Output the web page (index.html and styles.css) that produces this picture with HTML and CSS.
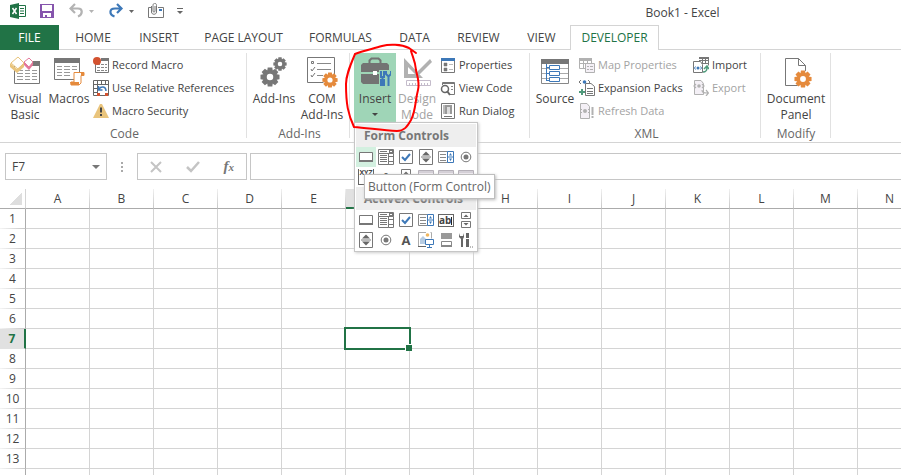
FILE: index.html
```html
<!DOCTYPE html>
<html lang="en">
<head>
<meta charset="utf-8">
<title>Book1 - Excel</title>
<link rel="stylesheet" href="styles.css">
</head>
<body>
<svg class="sprite" aria-hidden="true">
  <symbol id="i-button" viewBox="0 0 16 16"><path d="M1.500 3.500h13v9h-13z" fill="#fff" stroke="#777"/><path d="M1 12h14" stroke="#777" stroke-width="2"/></symbol>
  <symbol id="i-combo" viewBox="0 0 16 16"><path d="M.500.500h15v4H.500zM.500 4.500v11h10v-11M10.500 4.500v11h5v-11" fill="#fff" stroke="#777"/><path d="M11 1h4v3h-4z" fill="#777"/><path d="M12 2h2v1h-2z" fill="#fff"/><path d="M2 2.500h7M2 6.500h7M2 8.500h7M2 10.500h7M2 12.500h7M11 12.500h4M11 7.500h4" stroke="#777"/></symbol>
  <symbol id="i-check" viewBox="0 0 16 16"><path d="M1.500 1.500h13v13h-13z" fill="#fff" stroke="#777"/><path d="M4 8l3 3 5-6" fill="none" stroke="#3d78b8" stroke-width="2"/></symbol>
  <symbol id="i-spin" viewBox="0 0 16 16"><path d="M1.500.500h13v15h-13zM3 8h10" fill="#fff" stroke="#777"/><path d="M4 6.500l4-4 4 4zM4 9.500l4 4 4-4z" fill="#666"/></symbol>
  <symbol id="i-list" viewBox="0 0 16 16"><path d="M.500 2.500h9v11h-9z" fill="#fff" stroke="#888"/><path d="M2 5.500h6M2 8.500h6M2 11.500h6" stroke="#888"/><path d="M9.500 2.500h6v11h-6zM9 8h7" fill="#fff" stroke="#3d78b8"/><path d="M11 6.500l1.500-2.500L14 6.500zM11 9.500l1.500 2.500L14 9.500z" fill="#3d78b8"/></symbol>
  <symbol id="i-radio" viewBox="0 0 16 16"><circle cx="8" cy="8" r="4.800" fill="#fff" stroke="#777"/><circle cx="8" cy="8" r="2.500" fill="#777"/></symbol>
  <symbol id="i-scroll" viewBox="0 0 16 16"><path d="M3.500.500h9v6h-9zM3.500 9.500h9v6h-9z" fill="#fff" stroke="#777"/><path d="M5.500 5L8 2.500 10.500 5zM5.500 11L8 13.500 10.500 11z" fill="#666"/></symbol>
  <symbol id="i-table" viewBox="0 0 16 16"><path d="M.500 1.500h15v13H.500z" fill="#f4f0f6" stroke="#b5b0b8"/><path d="M1 3h14M3 6.500h10M3 9.500h10" stroke="#b5b0b8"/></symbol>
  <symbol id="i-image" viewBox="0 0 16 16"><path d="M8 .500H.500v14h7M12.500.500h1M13.500.500v6" fill="none" stroke="#aaa"/><path d="M0 14.500h8" stroke="#666"/><path d="M2 12V7l3-3 3 3v5z" fill="#b7cce2"/><circle cx="9.500" cy="3" r="1.800" fill="#efb760"/><path d="M7.500 7.500h8v5h-8zM11.500 13v2M9 15.500h5" fill="#fff" stroke="#3d78b8"/></symbol>
  <symbol id="i-toggle" viewBox="0 0 16 16"><path d="M3 1h11v6H3z" fill="#999"/><path d="M3.500 9.500h10v5h-10z" fill="#fff" stroke="#888"/><path d="M3 14h11" stroke="#888" stroke-width="2"/></symbol>
  <symbol id="i-more" viewBox="0 0 16 16"><path d="M3 15V7L1 5V1l1 3h3l1-3v4L5 7v8z" fill="#666"/><path d="M9.500 1v5M9.500 7v8" stroke="#666" stroke-width="3"/><path d="M12 15h1M14 15h1" stroke="#777"/></symbol>
  <symbol id="i-gear" viewBox="-10 -10 20 20"><g fill="currentColor"><path id="tooth" d="M-2.300-9.500h4.600l.6 4h-5.800z"/><use href="#tooth" transform="rotate(45)"/><use href="#tooth" transform="rotate(90)"/><use href="#tooth" transform="rotate(135)"/><use href="#tooth" transform="rotate(180)"/><use href="#tooth" transform="rotate(225)"/><use href="#tooth" transform="rotate(270)"/><use href="#tooth" transform="rotate(315)"/></g><circle r="5" fill="none" stroke="currentColor" stroke-width="3.500"/></symbol>
</svg>

<header class="titlebar">
  <div class="quick">
    <svg width="16" height="16" viewBox="0 0 16 16"><path d="M9 2.500h6.500v11H9" fill="#fff" stroke="#217346"/><path d="M10 5.500h4M10 8h4M10 10.500h4" stroke="#217346"/><path d="M0 2l9-2v16l-9-2z" fill="#217346"/><path d="M2.500 5l4 6M6.500 5l-4 6" stroke="#fff" stroke-width="1.500"/></svg>
    <button class="q-save" aria-label="Save"><svg width="14" height="14" viewBox="0 0 14 14"><path d="M0 0h14v14H0z" fill="#8655ad"/><path d="M2 1h10v6H2zM3 9h8v4H7v-2H5v2H3z" fill="#fff"/></svg></button>
    <button class="q-undo" aria-label="Undo"><svg width="25" height="16" viewBox="0 0 25 16"><path d="M6 1L1.500 5.500 6 10M2 5.500h7c5 0 5 6 0 8" fill="none" stroke="#b3b3b3" stroke-width="2.200"/><path d="M20 7h5l-2.500 3z" fill="#b3b3b3"/></svg></button>
    <button class="q-redo" aria-label="Redo"><svg width="25" height="16" viewBox="0 0 25 16"><path d="M8 1l4.500 4.500L8 10M12 5.500H6c-6 0-6 6-.5 8" fill="none" stroke="#3d78b8" stroke-width="2.200"/><path d="M20 7h5l-2.500 3z" fill="#666"/></svg></button>
    <button class="q-mail" aria-label="Email"><svg width="16" height="16" viewBox="0 0 16 16"><path d="M3 4.500H.500v10h15v-10H10" fill="#fff" stroke="#777"/><path d="M3.500 3v6c0 3 5 3 5 0V2.500c0-3-3.500-3-3.500 0V8c0 1.500 2 1.500 2 0V3" fill="none" stroke="#777"/><path d="M11 6h3v2h-3z" fill="#3d78b8"/></svg></button>
    <button class="q-custom" aria-label="Customize"><svg width="6" height="8" viewBox="0 0 6 8"><path d="M0 1.500h6" stroke="#666"/><path d="M0 4h6L3 7z" fill="#666"/></svg></button>
  </div>
  <h1>Book1 - Excel</h1>
</header>

<nav class="tabs">
  <a href="#" class="file">FILE</a><a href="#">HOME</a><a href="#">INSERT</a><a href="#">PAGE LAYOUT</a><a href="#">FORMULAS</a><a href="#">DATA</a><a href="#">REVIEW</a><a href="#">VIEW</a><a href="#" class="active">DEVELOPER</a>
</nav>

<section class="ribbon">
  <div class="group">
    <div class="tools">
      <button class="big"><svg width="32" height="32" viewBox="0 0 32 32"><path d="M5.500 10v17.500h25V9" fill="#fff" stroke="#777"/><path d="M23 5h8v5h-8z" fill="#777"/><path d="M8 14.500h6m2 0h5m2 0h5M8 17.500h6m2 0h5m2 0h5M8 20.500h6m2 0h5m2 0h5M8 23.500h6m2 0h5m2 0h5" stroke="#999"/><path d="M9 1l6 6-6 6-7-6z" fill="#fff" stroke="#e9c47c"/><path d="M1 7l7 6 7-6v4l-7 6-7-6z" fill="#e9c47c"/><path d="M20 2l4 4-4 5-5-5z" fill="#fff" stroke="#e3789a"/><path d="M15 6l5 5 4-5v3l-4 5-5-5z" fill="#e3789a"/></svg><span>Visual<br>Basic</span></button>
      <button class="big"><svg width="32" height="32" viewBox="0 0 32 32"><path d="M1.500 2.500h25v21h-25z" fill="#fff" stroke="#777"/><path d="M1 2h26v5H1z" fill="#777"/><path d="M4 10.500h5m2 0h6m2 0h5M4 13.500h5m2 0h6m2 0h5M4 16.500h5m2 0h6M4 19.500h5m2 0h6" stroke="#999"/><path d="M21 16.500h10v3h-3V27l-2 2H18v-3h3z" fill="#fff" stroke="#e58a3c"/><path d="M17 26h9v3h-8zM28 16h3v4h-3z" fill="#e58a3c"/></svg><span>Macros</span></button>
      <div class="stack">
        <button><svg width="16" height="16" viewBox="0 0 16 16"><path d="M2.500 3v12.500h13V2" fill="#fff" stroke="#777"/><path d="M8 1h8v3H8z" fill="#777"/><path d="M4 7.500h3m1 0h3m1 0h2M4 10.500h3m1 0h3m1 0h2M4 13.500h3m1 0h3m1 0h2" stroke="#888"/><circle cx="4" cy="4" r="4" fill="#d35230"/></svg>Record Macro</button>
        <button><svg width="16" height="16" viewBox="0 0 16 16"><path d="M.500.500h15v15H.500z" fill="#fff" stroke="#666"/><path d="M0 4.500h16M4.500 0v16M8.500 0v4M12.500 0v4M0 8.500h4M0 12.500h4" stroke="#666"/><path d="M13 11c0-5-5-5-7-2M5.500 6v4h4" fill="none" stroke="#3d78b8" stroke-width="1.500"/><path d="M4 13h3v3H4zM12 13h3v3h-3z" fill="#d35230"/></svg>Use Relative References</button>
        <button><svg width="16" height="16" viewBox="0 0 16 16"><path d="M7 1h2l7 14H0z" fill="#e9c47c"/><path d="M8 4.500v5M8 11v2" stroke="#444" stroke-width="2"/></svg>Macro Security</button>
      </div>
    </div>
    <div class="caption">Code</div>
  </div>
  <div class="group addins">
    <div class="tools">
      <button class="big"><svg width="32" height="32" viewBox="0 0 32 32" color="#777"><use href="#i-gear" x="2" y="11" width="20" height="20"/><use href="#i-gear" x="15" y="1" width="14" height="14"/></svg><span>Add-Ins</span></button>
      <button class="big"><svg width="32" height="32" viewBox="0 0 32 32" color="#e58a3c"><path d="M1.500 1.500h27v25h-27z" fill="#fff" stroke="#777"/><path d="M11 7.500h14M11 13.500h14M11 19.500h6" stroke="#888"/><path d="M5.500 5.500h2v2h-2zM5 13l1 2 3-4M5 19l1 2 3-4" fill="none" stroke="#777"/><circle cx="24" cy="24" r="7" fill="#fff"/><use href="#i-gear" x="16" y="16" width="16" height="16"/></svg><span>COM<br>Add-Ins</span></button>
    </div>
    <div class="caption">Add-Ins</div>
  </div>
  <div class="group controls">
    <div class="tools">
      <div class="insert">
        <button class="big pressed"><svg width="32" height="32" viewBox="0 0 32 32"><path d="M10.500 7V4.500l2-2h7l2 2V7" fill="none" stroke="#737373" stroke-width="2"/><path d="M4 7h24l2 2v7H2V9zM2 18h28v10H4l-2-2z" fill="#737373"/><path d="M14 15h4v4h-4z" fill="#fff"/><path d="M20 14h12v18H20z" fill="#9fd5b7"/><path d="M22 15v6h3v-6M23.500 20v3" fill="none" stroke="#3d78b8" stroke-width="2"/><path d="M21 23h5v7h-5z" fill="#3d78b8"/><path d="M27 15v3l2 2h1l2-2v-3M29.500 20v10" fill="none" stroke="#3d78b8" stroke-width="2"/></svg><span>Insert</span><i class="drop"></i></button>
        <div class="menu">
          <h2>Form Controls</h2>
          <div class="icons">
            <button class="hover" aria-label="Button"><svg><use href="#i-button"/></svg></button><button aria-label="Combo Box"><svg><use href="#i-combo"/></svg></button><button aria-label="Check Box"><svg><use href="#i-check"/></svg></button><button aria-label="Spin Button"><svg><use href="#i-spin"/></svg></button><button aria-label="List Box"><svg><use href="#i-list"/></svg></button><button aria-label="Option Button"><svg><use href="#i-radio"/></svg></button>
            <button aria-label="Group Box"><span class="xyz">XYZ</span></button><button aria-label="Label"><span class="glyph">A</span></button><button aria-label="Scroll Bar"><svg><use href="#i-scroll"/></svg></button><button aria-label="Text Field" disabled><svg><use href="#i-table"/></svg></button><button aria-label="Combo List" disabled><svg><use href="#i-table"/></svg></button><button aria-label="Combo Drop-Down" disabled><svg><use href="#i-table"/></svg></button>
          </div>
          <h2>ActiveX Controls</h2>
          <div class="icons">
            <button aria-label="Command Button"><svg><use href="#i-button"/></svg></button><button aria-label="Combo Box"><svg><use href="#i-combo"/></svg></button><button aria-label="Check Box"><svg><use href="#i-check"/></svg></button><button aria-label="List Box"><svg><use href="#i-list"/></svg></button><button aria-label="Text Box"><span class="ab">ab</span></button><button aria-label="Scroll Bar"><svg><use href="#i-scroll"/></svg></button>
            <button aria-label="Spin Button"><svg><use href="#i-spin"/></svg></button><button aria-label="Option Button"><svg><use href="#i-radio"/></svg></button><button aria-label="Label"><span class="glyph">A</span></button><button aria-label="Image"><svg><use href="#i-image"/></svg></button><button aria-label="Toggle Button"><svg><use href="#i-toggle"/></svg></button><button aria-label="More Controls"><svg><use href="#i-more"/></svg></button>
          </div>
          <div class="tip" role="tooltip">Button (Form Control)</div>
        </div>
        <svg class="ring" width="84" height="94" viewBox="340 40 84 94"><path d="M416 53L409 48C401 44 389 44 382 46C372 49 362 51 355 54C350 66 346 75 346 84C346 104 348 114 354 127C367 128 382 130 397 131C404 131 407 127 411 120C416 110 415 101 418 90C420 82 417 76 416 70C415 60 413 58 411 51"/></svg>
      </div>
      <button class="big" disabled><svg width="32" height="32" viewBox="0 0 32 32"><path d="M3 2l19 20H3zM7 11v7h7z" fill="#b1b1b1" fill-rule="evenodd"/><path d="M29 3L17 15l-3 5 5-2L31 6z" fill="#b1b1b1"/><path d="M5.500 24.500h24v5h-24z" fill="#fff" stroke="#c4bccb"/><path d="M8.500 27v2m3-2v2m3-2v2m3-2v2m3-2v2m3-2v2m3-2v2" stroke="#c4bccb"/></svg><span>Design<br>Mode</span></button>
      <div class="stack">
        <button><svg width="16" height="16" viewBox="0 0 16 16"><path d="M1.500 1.500h13v14h-13z" fill="#fff" stroke="#777"/><path d="M1 1h14v3H1z" fill="#3d78b8"/><path d="M4 6h3v3H4zM4 11h3v3H4zM9 7.500h4M9 12.500h4" fill="#777" stroke="#777" stroke-width=".5"/></svg>Properties</button>
        <button><svg width="16" height="16" viewBox="0 0 16 16"><path d="M2.500 5V2.500h12v12H9M2 3.500h12" fill="none" stroke="#777"/><circle cx="5" cy="9" r="3.500" fill="#fff" stroke="#666" stroke-width="1.500"/><path d="M7 11l3 4" stroke="#666" stroke-width="2"/><path d="M11 6.500h2M11 9.500h2" stroke="#888"/></svg>View Code</button>
        <button><svg width="16" height="16" viewBox="0 0 16 16"><path d="M1.500.500h13v15h-13z" fill="#fff" stroke="#777"/><path d="M5 2h7v9H5z" fill="#999"/><path d="M7 4h3v7H7z" fill="#ddd"/><path d="M4 13.500h8M4 2v9" stroke="#777"/></svg>Run Dialog</button>
      </div>
    </div>
  </div>
  <div class="group xml">
    <div class="tools">
      <button class="big"><svg width="32" height="32" viewBox="0 0 32 32"><path d="M2.500 4v23.500h27V4" fill="#fff" stroke="#888"/><path d="M2 3h28v5H2z" fill="#777"/><path d="M3 12.500h26M3 17.500h26M3 22.500h26" stroke="#aaa"/><path d="M7.500 8v17M7 11.500h4M7 17.500h4M7 24.500h4" stroke="#3d78b8" fill="none"/><path d="M10.500 9.500h10v4h-10zM10.500 15.500h10v4h-10zM10.500 21.500h10v4h-10z" fill="#fff" stroke="#3d78b8"/></svg><span>Source</span></button>
      <div class="stack first">
        <button disabled><svg width="16" height="16" viewBox="0 0 16 16"><path d="M.500 1.500h12v10H.500zM0 6.500h12M4.500 2v9M8.500 2v9" fill="#fff" stroke="#b1b1b1"/><path d="M0 1h13v3H0z" fill="#b1b1b1"/><path d="M6.500 6.500h9v9h-9zM8 9.500h2M8 12.500h2M11 9.500h3M11 12.500h3" fill="#f4f0f6" stroke="#b1b1b1"/></svg>Map Properties</button>
        <button><svg width="16" height="16" viewBox="0 0 16 16"><path d="M6.500 5V3.500H12l3.500 3v9h-9zM8 8.500h6M8 11.500h6M8 13.500h6" fill="#fff" stroke="#777"/><path d="M2 0L0 2l2 2M9 0l2 2-2 2" fill="none" stroke="#777"/><circle cx="5.500" cy="2" r="1.800" fill="#3d78b8"/><path d="M3 9v6M0 12h6" stroke="#4f9a7b" stroke-width="2"/></svg>Expansion Packs</button>
        <button disabled><svg width="16" height="16" viewBox="0 0 16 16"><path d="M1.500.500H8l2.500 3v12h-9z" fill="#f4f0f6" stroke="#b1b1b1"/><circle cx="6" cy="8" r="2" fill="#b1b1b1"/><path d="M3 6L1 8l2 2M9 6l2 2-2 2" fill="none" stroke="#b1b1b1"/><path d="M13.500 4v8M13.500 13v2" stroke="#b1b1b1" stroke-width="2"/></svg>Refresh Data</button>
      </div>
      <div class="stack">
        <button><svg width="16" height="16" viewBox="0 0 16 16"><path d="M6.500.500h9v8M6 3.500h9M6 6.500h9M9.500 1v6M12.500 1v6" fill="none" stroke="#777"/><path d="M6 0h10v2H6z" fill="#777"/><path d="M.500 4.500h7l2 3v8h-9z" fill="#fff" stroke="#777"/><circle cx="5" cy="11" r="1.500" fill="#3d78b8"/><path d="M2.500 9.500L1.500 11l1 1.500M7.500 9.500l1 1.500-1 1.500" fill="none" stroke="#3d78b8"/><path d="M10 15c3 0 4-1 4-5M11 12l3-3 2 3" fill="none" stroke="#4f9a7b" stroke-width="1.500"/></svg>Import</button>
        <button disabled><svg width="16" height="16" viewBox="0 0 16 16"><path d="M1.500.500H8l2.500 3v11h-9z" fill="#f4f0f6" stroke="#b1b1b1"/><circle cx="6" cy="6" r="1.800" fill="#b1b1b1"/><path d="M3 4L1 6l2 2M9 4l2 2-2 2M9 10c0 3 2 3 6 3M13 10l2.500 3-2.500 3" fill="none" stroke="#b1b1b1" stroke-width="1.200"/></svg>Export</button>
      </div>
    </div>
    <div class="caption">XML</div>
  </div>
  <div class="group modify">
    <div class="tools">
      <button class="big"><svg width="32" height="32" viewBox="0 0 32 32" color="#e58a3c"><path d="M5.500 2.500h13l7 7v20h-20zM18.500 2.500v7h7" fill="#fff" stroke="#777"/><circle cx="23" cy="23" r="8.500" fill="#fff"/><use href="#i-gear" x="14" y="14" width="18" height="18"/></svg><span>Document<br>Panel</span></button>
    </div>
    <div class="caption">Modify</div>
  </div>
</section>

<section class="formula">
  <div class="namebox"><input type="text" value="F7" aria-label="Name box"><button aria-label="Show names"><svg width="8" height="4" viewBox="0 0 8 4"><path d="M0 0h8L4 4z" fill="#777"/></svg></button></div>
  <div class="dots"><i></i><i></i><i></i></div>
  <div class="fx">
    <button aria-label="Cancel"><svg width="12" height="12" viewBox="0 0 12 12"><path d="M1 1l10 10M11 1L1 11" stroke="#c4c4c4" stroke-width="2"/></svg></button>
    <button aria-label="Enter"><svg width="14" height="12" viewBox="0 0 14 12"><path d="M1 6l4 4 8-9" fill="none" stroke="#c4c4c4" stroke-width="2.500"/></svg></button>
    <button class="fn" aria-label="Insert function">f<small>x</small></button>
  </div>
  <input class="entry" type="text" aria-label="Formula bar">
</section>

<main class="sheet"><table id="grid"><thead></thead><tbody></tbody></table></main>
<script src="app.js"></script>
</body>
</html>
```
FILE: styles.css
```css
* { box-sizing: border-box; }
body {
  margin: 0;
  height: 100vh;
  overflow: hidden;
  display: flex;
  flex-direction: column;
  background: #fff;
  color: #444;
  font: 12px/16px "Open Sans", "Noto Sans", sans-serif;
}
button, input { font: inherit; color: inherit; border: 0; padding: 0; margin: 0; background: none; }
button:disabled { color: #a3a3a3; }
svg { display: block; flex: none; }
.sprite { position: absolute; width: 0; height: 0; }

.titlebar { display: flex; align-items: center; height: 25px; flex: none; }
.quick { display: flex; align-items: center; padding: 0 0 4px 10px; width: 464px; }
.q-save { margin-left: 14px; }
.q-undo { margin-left: 15px; }
.q-redo { margin-left: 15px; }
.q-mail { margin-left: 14px; }
.q-custom { margin-left: 13px; }
h1 { flex: 1; margin: 0; font-size: 12px; font-weight: 400; text-align: center; }

.tabs {
  display: grid;
  grid-template-columns: 59px 68px 64px 105px 89px 59px 69px 57px 89px;
  height: 25px;
  flex: none;
  box-shadow: inset 0 -1px #d4d4d4;
}
.tabs a { color: #444; text-decoration: none; text-align: center; line-height: 25px; white-space: nowrap; }
.tabs .file { background: #217346; color: #fff; }
.tabs .active { color: #217346; background: #fff; border: 1px solid #d4d4d4; border-bottom: 0; line-height: 24px; }

.ribbon { display: flex; flex: none; height: 93px; padding-top: 3px; border-bottom: 1px solid #d4d4d4; }
.group { flex: none; width: 247px; height: 85px; padding-left: 3px; border-right: 1px solid #e1e1e1; }
.addins { width: 103px; }
.controls { width: 180px; padding-left: 4px; }
.xml { width: 231px; }
.modify { width: 70px; padding-right: 2px; }
.tools { display: flex; height: 69px; }
.caption { margin-top: 4px; text-align: center; color: #666; }
.big { flex: none; display: flex; flex-direction: column; align-items: center; width: 44px; padding-top: 3px; gap: 3px; text-align: center; white-space: nowrap; }
.addins .big { width: 48px; }
.controls .big { width: 42px; }
.modify .big { width: 100%; }
.pressed { background: #9fd5b7; height: 69px; }
.drop { border: 3px solid transparent; border-top-color: #444; border-bottom: 0; margin-top: 3px; }
.stack { padding-left: 2px; font-size: 11px; }
.stack button { display: flex; align-items: center; gap: 3px; height: 23px; white-space: nowrap; }
.xml .first { width: 114px; }

.insert { position: relative; z-index: 2; }
.menu { position: absolute; top: 69px; left: 0; width: 124px; padding: 1px; background: #fff; border: 1px solid #c6c6c6; box-shadow: 1px 1px 3px #ccc; }
.menu h2 { margin: 0; padding-left: 8px; height: 23px; background: #eee; color: #777; font-size: 12px; line-height: 23px; white-space: nowrap; }
.icons { display: grid; grid-template-columns: repeat(6, 20px); grid-auto-rows: 20px; }
.icons button { display: flex; align-items: center; justify-content: center; overflow: hidden; }
.icons svg { width: 16px; height: 16px; }
.icons .hover { background: #d3f0e0; }
.glyph { font-size: 13px; font-weight: 700; color: #555; }
.ab { width: 16px; height: 13px; border: 1px solid #666; font-size: 10px; font-weight: 700; line-height: 10px; text-align: left; background: linear-gradient(#222, #222) 12px 2px / 1px 8px no-repeat; }
.xyz { width: 16px; height: 16px; border: solid #666; border-width: 0 1px 1px; font-size: 7px; font-weight: 700; line-height: 7px; text-align: center; }
.tip { position: absolute; left: 9px; top: 51px; padding: 0 3px; line-height: 23px; white-space: nowrap; color: #666; background: #fff; border: 1px solid #bebebe; box-shadow: 1px 1px 3px #bbb; }
.ring { position: absolute; left: -14px; top: -13px; pointer-events: none; }
.ring path { fill: none; stroke: #f00; stroke-width: 2; stroke-linejoin: round; stroke-linecap: round; }

.formula { display: flex; flex: none; padding: 10px 0 9px 5px; height: 46px; }
.namebox { display: flex; align-items: center; width: 102px; height: 27px; padding: 0 6px; border: 1px solid #c6c6c6; }
.namebox input { flex: 1; min-width: 0; }
.dots { display: flex; flex-direction: column; align-items: center; justify-content: center; gap: 2px; width: 30px; }
.dots i { width: 2px; height: 2px; background: #aaa; }
.fx { display: flex; align-items: center; justify-content: space-around; width: 110px; height: 27px; border: 1px solid #c6c6c6; }
.fn { font: italic bold 15px/20px "Liberation Serif", serif; color: #777; }
.fn small { font-size: 11px; }
.entry { flex: 1; height: 27px; margin-left: 3px; border: 1px solid #c6c6c6; border-right: 0; }

.sheet { flex: 1; min-height: 0; overflow: hidden; }
table { table-layout: fixed; width: 922px; border-collapse: separate; border-spacing: 0; }
th, td { height: 20px; padding: 0; border: solid #d4d4d4; border-width: 0 1px 1px 0; line-height: 18px; }
th { font-weight: 400; }
tbody th {
  padding-top: 1px;
  border-right-color: #ababab;
  border-bottom-color: transparent;
  background: linear-gradient(90deg, #f4f4f4, #c6c6c6) bottom / 100% 1px no-repeat border-box;
}
thead th {
  border-bottom-color: #ababab;
  border-right-color: transparent;
  background: linear-gradient(#f0f0f0, #c6c6c6) right / 1px 100% no-repeat border-box;
}
thead th:first-child {
  width: 26px;
  border-right-color: #d4d4d4;
  background: linear-gradient(135deg, transparent 50%, #dedede 50%) 10px 4px / 12px 12px no-repeat;
}
thead .current { background: #e1e1e1; border-bottom: 2px solid #217346; color: #217346; font-weight: 700; }
tbody .current { background: #e1e1e1; border-right: 2px solid #217346; color: #217346; font-weight: 700; }
.selected { position: relative; }
.selected::before { content: ""; position: absolute; inset: -2px; border: 2px solid #217346; }
.selected::after { content: ""; position: absolute; right: -3px; bottom: -3px; width: 6px; height: 6px; background: #217346; border: solid #fff; border-width: 1px 0 0 1px; }
```
FILE: app.js
```js
const letters = "ABCDEFGHIJKLMN".split("");
const active = { column: "F", row: 7 };
const lastLabel = 13;
const grid = document.getElementById("grid");

const head = grid.tHead.insertRow();
["", ...letters].forEach((name) => {
  const th = document.createElement("th");
  th.textContent = name;
  if (name === active.column) th.className = "current";
  head.append(th);
});

for (let row = 1; row <= lastLabel + 1; row++) {
  const tr = grid.tBodies[0].insertRow();
  const th = document.createElement("th");
  th.textContent = row <= lastLabel ? row : "";
  if (row === active.row) th.className = "current";
  tr.append(th);
  letters.forEach((name) => {
    const td = tr.insertCell();
    if (name === active.column && row === active.row) td.className = "selected";
  });
}
```
